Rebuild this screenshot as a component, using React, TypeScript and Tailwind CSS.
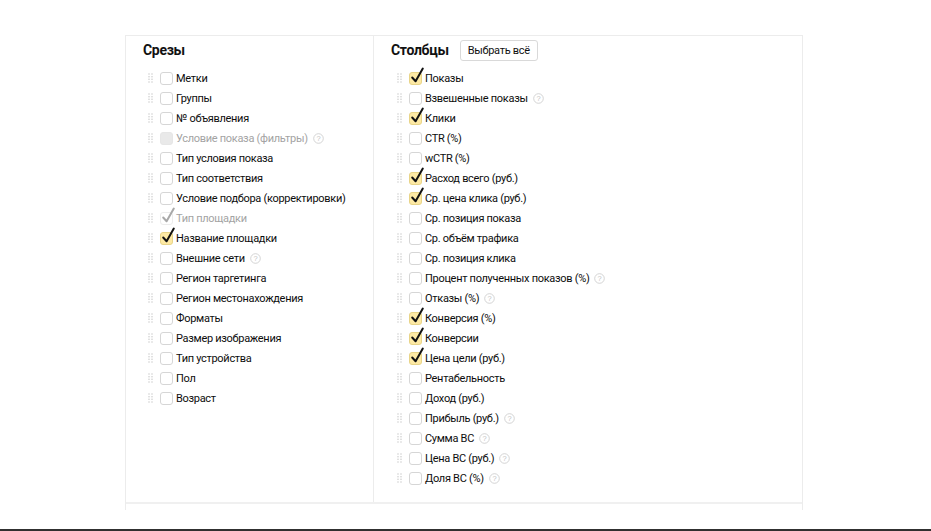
import React from "react";

type Item = { label: string; checked?: boolean; disabled?: boolean; help?: boolean };

const left: Item[] = [
  { label: "Метки" },
  { label: "Группы" },
  { label: "№ объявления" },
  { label: "Условие показа (фильтры)", disabled: true, help: true },
  { label: "Тип условия показа" },
  { label: "Тип соответствия" },
  { label: "Условие подбора (корректировки)" },
  { label: "Тип площадки", disabled: true, checked: true },
  { label: "Название площадки", checked: true },
  { label: "Внешние сети", help: true },
  { label: "Регион таргетинга" },
  { label: "Регион местонахождения" },
  { label: "Форматы" },
  { label: "Размер изображения" },
  { label: "Тип устройства" },
  { label: "Пол" },
  { label: "Возраст" },
];

const right: Item[] = [
  { label: "Показы", checked: true },
  { label: "Взвешенные показы", help: true },
  { label: "Клики", checked: true },
  { label: "CTR (%)" },
  { label: "wCTR (%)" },
  { label: "Расход всего (руб.)", checked: true },
  { label: "Ср. цена клика (руб.)", checked: true },
  { label: "Ср. позиция показа" },
  { label: "Ср. объём трафика" },
  { label: "Ср. позиция клика" },
  { label: "Процент полученных показов (%)", help: true },
  { label: "Отказы (%)", help: true },
  { label: "Конверсия (%)", checked: true },
  { label: "Конверсии", checked: true },
  { label: "Цена цели (руб.)", checked: true },
  { label: "Рентабельность" },
  { label: "Доход (руб.)" },
  { label: "Прибыль (руб.)", help: true },
  { label: "Сумма ВС", help: true },
  { label: "Цена ВС (руб.)", help: true },
  { label: "Доля ВС (%)", help: true },
];

function Grip() {
  return (
    <svg width="6" height="10" viewBox="0 0 6 10" className="shrink-0">
      {[1, 4].map((x) =>
        [1, 3.7, 6.3, 9].map((y) => (
          <rect key={`${x}-${y}`} x={x - 0.7} y={y - 0.7} width="1.4" height="1.4" fill="#d4d4d4" />
        ))
      )}
    </svg>
  );
}

function Help() {
  return (
    <svg width="11" height="11" viewBox="0 0 11 11" className="ml-[5px] shrink-0">
      <circle cx="5.5" cy="5.5" r="4.8" fill="none" stroke="#cfcfcf" strokeWidth="0.9" />
      <text x="5.5" y="8.3" textAnchor="middle" fontSize="7.5" fill="#c2c2c2" fontFamily="Liberation Sans, Arial, sans-serif">
        ?
      </text>
    </svg>
  );
}

function Box({ checked, disabled }: { checked?: boolean; disabled?: boolean }) {
  let cls = "border-[#d6d6d6] bg-white";
  if (disabled && !checked) cls = "border-[#e6e6e6] bg-[#e9e9e9]";
  if (disabled && checked) cls = "border-[#ececec] bg-white";
  if (checked && !disabled) cls = "border-[#e8d488] bg-[#fde9a4]";
  return (
    <span className={`relative block w-[13px] h-[13px] rounded-[3px] border shrink-0 ${cls}`}>
      {checked && (
        <svg
          width="16"
          height="18"
          viewBox="0 0 16 18"
          className="absolute left-[0px] top-[-6px] overflow-visible"
        >
          <path
            d="M2.2 10.5 L5.6 14.2 L12.8 1.6"
            fill="none"
            stroke={disabled ? "#a8a8a8" : "#111"}
            strokeWidth="2"
            strokeLinecap="round"
            strokeLinejoin="round"
          />
        </svg>
      )}
    </span>
  );
}

function Row({ item }: { item: Item }) {
  return (
    <div className="flex items-center h-[20px]">
      <Grip />
      <span className="ml-[6px]">
        <Box checked={item.checked} disabled={item.disabled} />
      </span>
      <span className={`ml-[3px] leading-none ${item.disabled ? "text-[#a3a3a3]" : "text-[#0d0d0d]"}`}>
        {item.label}
      </span>
      {item.help && <Help />}
    </div>
  );
}

export default function App() {
  return (
    <div
      className="h-[531px] w-[931px] bg-white flex flex-col overflow-hidden text-[11px] tracking-[-0.3px]"
      style={{ fontFamily: 'Roboto, "Liberation Sans", Arial, sans-serif' }}
    >
      <div className="pt-[35px] pl-[125px]">
        <div className="w-[678px] border-l border-r border-t border-[#ececec]">
          <div className="flex h-[466px]">
            <div className="w-[248px] border-r border-[#ececec] pl-[17px] pt-[4px]">
              <div className="h-[21px] flex items-center text-[14px] font-bold text-[#111]">Срезы</div>
              <div className="mt-[7px] pl-[5px]">
                {left.map((it) => (
                  <Row key={it.label} item={it} />
                ))}
              </div>
            </div>
            <div className="flex-1 pl-[17px] pt-[4px]">
              <div className="h-[21px] flex items-center">
                <span className="text-[14px] font-bold text-[#111]">Столбцы</span>
                <button className="ml-[11px] h-[21px] px-[7px] border border-[#d9d9d9] rounded-[3px] bg-white text-[11px] tracking-[-0.3px] text-[#111] leading-none">
                  Выбрать всё
                </button>
              </div>
              <div className="mt-[7px] pl-[6px]">
                {right.map((it) => (
                  <Row key={it.label} item={it} />
                ))}
              </div>
            </div>
          </div>
          <div className="h-[8px] border-t-2 border-[#f0f0f0]" />
        </div>
      </div>
      <div className="flex-1" />
      <div className="h-[2px] bg-[#303030]" />
    </div>
  );
}
